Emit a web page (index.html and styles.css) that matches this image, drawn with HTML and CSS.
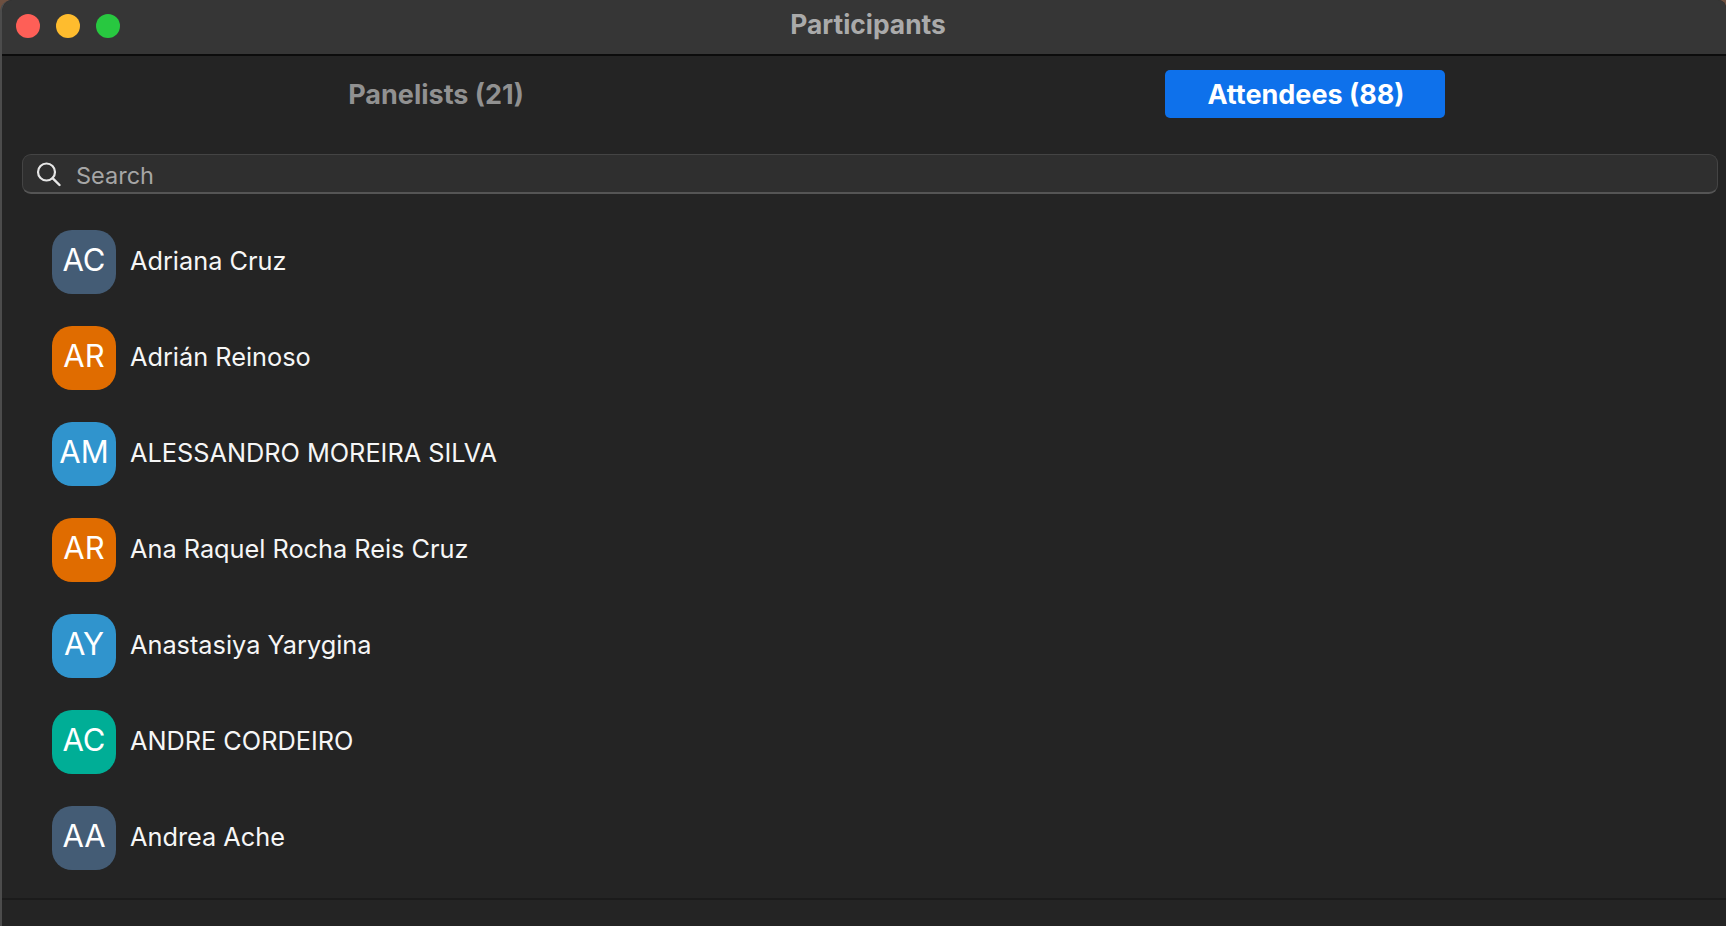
FILE: index.html
```html
<!DOCTYPE html>
<html>
<head>
<meta charset="UTF-8">
<title>Participants</title>
<link rel="stylesheet" href="styles.css">
</head>
<body>
<div class="window">
  <div class="titlebar">
    <div class="lights">
      <span class="light red"></span>
      <span class="light yellow"></span>
      <span class="light green"></span>
    </div>
    <div class="title">Participants</div>
  </div>
  <div class="tabs">
    <div class="tab">Panelists (21)</div>
    <div class="tab active">Attendees (88)</div>
  </div>
  <div class="search">
    <svg class="search-icon" width="26" height="26" viewBox="0 0 26 26">
      <circle cx="11.5" cy="11" r="8.5" fill="none" stroke="#e6e6e6" stroke-width="2.2"/>
      <path d="M17.8 17.3 L24.5 24" fill="none" stroke="#e6e6e6" stroke-width="2.4" stroke-linecap="round"/>
    </svg>
    <span class="search-text">Search</span>
  </div>
  <div class="list">
    <div class="row"><div class="avatar slate">AC</div><div class="name">Adriana Cruz</div></div>
    <div class="row"><div class="avatar orange">AR</div><div class="name">Adrián Reinoso</div></div>
    <div class="row"><div class="avatar blue">AM</div><div class="name">ALESSANDRO MOREIRA SILVA</div></div>
    <div class="row"><div class="avatar orange">AR</div><div class="name">Ana Raquel Rocha Reis Cruz</div></div>
    <div class="row"><div class="avatar blue">AY</div><div class="name">Anastasiya Yarygina</div></div>
    <div class="row"><div class="avatar teal">AC</div><div class="name">ANDRE CORDEIRO</div></div>
    <div class="row"><div class="avatar slate">AA</div><div class="name">Andrea Ache</div></div>
  </div>
  <div class="footer"></div>
</div>
</body>
</html>
```
FILE: styles.css
```css
html, body {
  margin: 0;
  height: 100%;
  background: #6e5040;
  overflow: hidden;
}
.window {
  box-sizing: border-box;
  height: 926px;
  border-left: 2px solid #4c4c4c;
  border-radius: 12px 8px 0 0;
  background: #242424;
  font-family: Inter, "Noto Sans", sans-serif;
  overflow: hidden;
}
.titlebar {
  box-sizing: border-box;
  height: 56px;
  padding-left: 8px;
  display: grid;
  grid-template-columns: 1fr auto 1fr;
  align-items: center;
  background: #363636;
  border-bottom: 2px solid #0c0c0c;
}
.lights {
  display: flex;
  gap: 16px;
  padding-left: 6px;
  padding-bottom: 2px;
}
.light {
  width: 24px;
  height: 24px;
  border-radius: 50%;
}
.red { background: #fe5f57; }
.yellow { background: #febc2e; }
.green { background: #28c840; }
.title {
  font-size: 26.4px;
  font-weight: 700;
  color: #aaa;
  padding-bottom: 6px;
}
.tabs {
  display: flex;
  gap: 590px;
  padding: 14px 0 0 293px;
}
.tab {
  width: 280px;
  height: 48px;
  line-height: 49px;
  border-radius: 5px;
  text-align: center;
  text-indent: 2px;
  font-size: 27px;
  font-weight: 700;
  color: #919191;
}
.tab.active {
  background: #0e71eb;
  color: #fff;
}
.search {
  box-sizing: border-box;
  height: 40px;
  margin: 36px 8px 0 20px;
  padding-left: 12px;
  display: flex;
  align-items: center;
  gap: 15px;
  background: #2f2f2f;
  border: 1px solid #444;
  border-bottom: 2px solid #555;
  border-radius: 9px;
}
.search-icon {
  margin-top: 1px;
}
.search-text {
  font-size: 23.5px;
  color: #a6a6a6;
  padding-top: 3px;
}
.list {
  padding-top: 36px;
  height: 704px;
  box-sizing: border-box;
}
.row {
  height: 64px;
  margin-bottom: 32px;
  padding-left: 50px;
  display: flex;
  align-items: center;
  gap: 14px;
}
.avatar {
  width: 64px;
  height: 64px;
  border-radius: 20px;
  display: flex;
  align-items: center;
  justify-content: center;
  padding-bottom: 5px;
  box-sizing: border-box;
  font-size: 31px;
  color: #fff;
}
.slate { background: #445c75; }
.orange { background: #e06c00; }
.blue { background: #3094cd; }
.teal { background: #00ae96; }
.name {
  font-size: 25.3px;
  color: #f6f6f6;
  padding-bottom: 4px;
}
.footer {
  height: 28px;
  border-top: 2px solid #1b1b1b;
}
```
